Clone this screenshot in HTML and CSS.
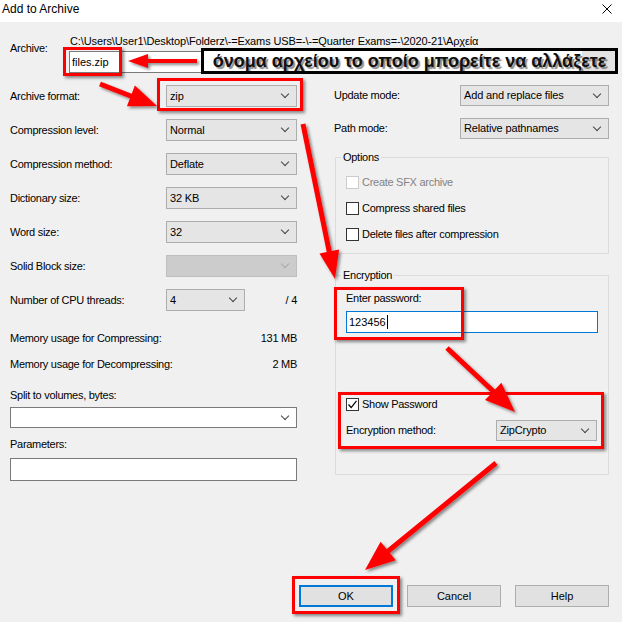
FILE: index.html
```html
<!DOCTYPE html>
<html lang="en">
<head>
<meta charset="utf-8">
<title>Add to Archive</title>
<link rel="stylesheet" href="styles.css">
</head>
<body>
<div class="window">
  <div class="titlebar">
    <span class="title">Add to Archive</span>
    <svg class="close" width="10" height="10" viewBox="0 0 10 10"><path d="M0.5 0.5L9.5 9.5M9.5 0.5L0.5 9.5" stroke="#000" stroke-width="1"/></svg>
  </div>
  <div class="body">
    <div class="archive-row">
      <div class="archive-label">Archive:</div>
      <div class="archive-main">
        <div class="path">C:\Users\User1\Desktop\Folderz\-=Exams USB=-\-=Quarter Exams=-\2020-21\Αρχεία</div>
        <div class="archive-inputs">
          <div class="edit-combo">files.zip</div>
          <div class="browse"></div>
        </div>
      </div>
    </div>

    <div class="columns">
      <div class="left">
        <div class="form-grid">
          <div class="lbl">Archive format:</div>
          <div class="combo"><span>zip</span></div>
          <div class="lbl">Compression level:</div>
          <div class="combo"><span>Normal</span></div>
          <div class="lbl">Compression method:</div>
          <div class="combo"><span>Deflate</span></div>
          <div class="lbl">Dictionary size:</div>
          <div class="combo"><span>32 KB</span></div>
          <div class="lbl">Word size:</div>
          <div class="combo"><span>32</span></div>
          <div class="lbl">Solid Block size:</div>
          <div class="combo disabled"><span></span></div>
          <div class="lbl">Number of CPU threads:</div>
          <div class="cpu-cell">
            <div class="combo cpu"><span>4</span></div>
            <span class="cpu-max">/ 4</span>
          </div>
        </div>
        <div class="mem-row first"><span>Memory usage for Compressing:</span><span>131 MB</span></div>
        <div class="mem-row"><span>Memory usage for Decompressing:</span><span>2 MB</span></div>
        <div class="field-label split-label">Split to volumes, bytes:</div>
        <div class="combo white split"><span></span></div>
        <div class="field-label params-label">Parameters:</div>
        <div class="textbox params"></div>
      </div>

      <div class="right">
        <div class="right-grid">
          <div class="lbl">Update mode:</div>
          <div class="combo"><span>Add and replace files</span></div>
          <div class="lbl">Path mode:</div>
          <div class="combo"><span>Relative pathnames</span></div>
        </div>

        <fieldset class="group options">
          <legend>Options</legend>
          <div class="check disabled"><span class="box"></span><span>Create SFX archive</span></div>
          <div class="check"><span class="box"></span><span>Compress shared files</span></div>
          <div class="check"><span class="box"></span><span>Delete files after compression</span></div>
        </fieldset>

        <fieldset class="group encryption">
          <legend>Encryption</legend>
          <div class="pw-label">Enter password:</div>
          <div class="textbox focused pw">123456<span class="caret"></span></div>
          <div class="check show-pw"><span class="box checked"><svg width="11" height="11" viewBox="0 0 11 11"><path d="M1.5 5.5L4.2 8.5L9.5 1.8" fill="none" stroke="#000" stroke-width="1.2"/></svg></span><span>Show Password</span></div>
          <div class="method-row">
            <span>Encryption method:</span>
            <div class="combo method"><span>ZipCrypto</span></div>
          </div>
        </fieldset>
      </div>
    </div>

    <div class="buttons">
      <div class="btn default">OK</div>
      <div class="btn">Cancel</div>
      <div class="btn">Help</div>
    </div>
  </div>

  <!-- annotations layered over the dialog -->
  <div class="redbox rb-file"></div>
  <div class="redbox rb-format"></div>
  <div class="redbox rb-pw"></div>
  <div class="redbox rb-show"></div>
  <div class="redbox rb-ok"></div>
  <div class="note">όνομα αρχείου το οποίο μπορείτε να αλλάξετε</div>

  <svg class="arrows" width="622" height="622" viewBox="0 0 622 622">
    <defs>
      <filter id="sh" x="-20%" y="-20%" width="140%" height="140%">
        <feDropShadow dx="2" dy="2" stdDeviation="1.4" flood-color="#000" flood-opacity="0.45"/>
      </filter>
    </defs>
    <g fill="#ff0000" stroke="#ff0000" filter="url(#sh)">
      <line x1="197" y1="61" x2="146" y2="61" stroke-width="4"/>
      <polygon points="128,61 148,54 148,68" stroke="none"/>

      <line x1="100" y1="84" x2="132" y2="96.5" stroke-width="5"/>
      <polygon points="157,106 126.9,106.2 134.9,85.6" stroke="none"/>

      <line x1="303" y1="124" x2="329.5" y2="253" stroke-width="5"/>
      <polygon points="335,279 319.5,253.6 339.1,249.6" stroke="none"/>

      <line x1="447" y1="348" x2="494" y2="392" stroke-width="5"/>
      <polygon points="515,412 485,400.1 501.4,382.7" stroke="none"/>

      <line x1="496" y1="463" x2="387" y2="552" stroke-width="5"/>
      <polygon points="365,570 380.6,541.7 395.8,560.3" stroke="none"/>
    </g>
  </svg>
</div>
</body>
</html>
```

FILE: styles.css
```css
* { box-sizing: border-box; }

html, body {
  margin: 0;
  padding: 0;
  background: #f0f0f0;
}

body {
  font-family: "Liberation Sans", Arial, sans-serif;
  font-size: 11px;
  line-height: 13px;
  letter-spacing: -0.28px;
  color: #000;
}

.window {
  position: relative;
  width: 622px;
  height: 622px;
  background: #f0f0f0;
  overflow: hidden;
}

/* title bar */
.titlebar {
  height: 22px;
  background: #fff;
  display: flex;
  align-items: flex-start;
  justify-content: space-between;
  padding: 0 10px 0 2px;
}
.title {
  font-size: 12px;
  line-height: 18px;
  letter-spacing: 0;
}
.close {
  margin-top: 4px;
}

.body {
  padding: 13px 13px 0 10px;
}

/* archive row */
.archive-row {
  display: grid;
  grid-template-columns: 59px 1fr;
}
.archive-label {
  margin-top: 7px;
}
.path {
  padding-left: 1px;
  white-space: nowrap;
  overflow: hidden;
  letter-spacing: -0.12px;
}
.archive-inputs {
  display: flex;
  gap: 4px;
  margin-top: 3px;
  height: 22px;
}
.edit-combo {
  flex: 1;
  background: #fff;
  border: 1px solid #7a7a7a;
  padding: 4px 2px;
  letter-spacing: 0;
}
.browse {
  width: 28px;
  background: #e1e1e1;
  border: 1px solid #adadad;
}

/* two columns */
.columns {
  display: grid;
  grid-template-columns: 287px 275px;
  column-gap: 37px;
  margin-top: 12px;
  align-items: start;
}

.form-grid {
  display: grid;
  grid-template-columns: 156px 131px;
  grid-auto-rows: 22px;
  row-gap: 12px;
}
.lbl {
  align-self: center;
  white-space: nowrap;
}

.combo {
  display: flex;
  align-items: center;
  justify-content: space-between;
  background: #e5e5e5;
  border: 1px solid #adadad;
  padding: 0 8px 0 3px;
  white-space: nowrap;
  letter-spacing: -0.15px;
}
.combo::after {
  content: "";
  width: 5px;
  height: 5px;
  border-right: 1px solid #444;
  border-bottom: 1px solid #444;
  transform: rotate(45deg);
  margin-top: -4px;
  flex: none;
}
.combo.disabled {
  background: #cccccc;
  border-color: #bfbfbf;
}
.combo.disabled::after {
  border-color: #a8a8a8;
}
.combo.white {
  background: #fff;
  border-color: #7a7a7a;
}

.cpu-cell {
  display: flex;
  justify-content: space-between;
  align-items: center;
}
.combo.cpu {
  width: 79px;
  height: 22px;
}

.mem-row {
  display: flex;
  justify-content: space-between;
  margin-top: 13px;
}
.mem-row.first {
  margin-top: 21px;
}
.field-label.split-label { margin-top: 18px; }
.combo.split {
  margin-top: 5px;
  height: 21px;
}
.field-label.params-label { margin-top: 10px; }

.textbox {
  background: #fff;
  border: 1px solid #7a7a7a;
}
.textbox.params {
  margin-top: 7px;
  height: 23px;
}

/* right column */
.right-grid {
  display: grid;
  grid-template-columns: 126px 149px;
  grid-auto-rows: 21px;
  row-gap: 12px;
}

.group {
  margin: 0 0 0 1px;
  border: 1px solid #dcdcdc;
  padding: 12px 10px 12px 10px;
  min-width: 0;
}
.group legend {
  padding: 0 2px;
  margin-left: -5px;
  line-height: 13px;
}
.options {
  margin-top: 12px;
}
.encryption {
  margin-top: 15px;
  padding-top: 10px;
  padding-bottom: 33px;
}

.check {
  display: flex;
  align-items: center;
  gap: 3px;
  height: 13px;
  white-space: nowrap;
}
.check + .check {
  margin-top: 13px;
}
.check .box {
  width: 13px;
  height: 13px;
  background: #fff;
  border: 1px solid #333;
  flex: none;
  display: flex;
  align-items: center;
  justify-content: center;
}
.check.disabled {
  color: #838383;
}
.check.disabled .box {
  border-color: #cccccc;
}

.textbox.pw {
  margin-top: 6px;
  height: 22px;
  border-color: #0078d7;
  padding: 3px 2px;
  display: flex;
  align-items: center;
  letter-spacing: 0;
}
.caret {
  display: inline-block;
  width: 1px;
  height: 14px;
  background: #000;
  margin-left: 1px;
}

.check.show-pw {
  margin-top: 65px;
}

.method-row {
  display: flex;
  justify-content: space-between;
  align-items: center;
  margin-top: 9px;
}
.combo.method {
  width: 101px;
  height: 21px;
  margin-right: 1px;
}

/* buttons */
.buttons {
  display: flex;
  justify-content: flex-end;
  gap: 14px;
  margin-top: 104px;
}
.btn {
  width: 94px;
  height: 22px;
  background: #e1e1e1;
  border: 1px solid #adadad;
  text-align: center;
  line-height: 20px;
  letter-spacing: 0;
}
.btn.default {
  border: 2px solid #0078d7;
  line-height: 18px;
}

/* annotations */
.redbox {
  position: absolute;
  border: 3px solid #ff0000;
  box-shadow: 2px 2px 3px rgba(0, 0, 0, 0.45);
}
.rb-file   { left: 63px;  top: 47px;  width: 59px;  height: 29px; }
.rb-format { left: 157px; top: 78px;  width: 146px; height: 33px; }
.rb-pw     { left: 334px; top: 287px; width: 130px; height: 53px; }
.rb-show   { left: 338px; top: 392px; width: 266px; height: 57px; }
.rb-ok     { left: 292px; top: 576px; width: 108px; height: 38px; }

.note {
  position: absolute;
  left: 201px;
  top: 48px;
  width: 417px;
  height: 26px;
  border: 3px solid #000;
  background: linear-gradient(to right, #fff 0 378px, #e3e3e3 378px);
  font-weight: bold;
  font-size: 18px;
  line-height: 20px;
  letter-spacing: 0;
  text-align: center;
  color: #111;
  text-shadow: 2px 2px 1px rgba(0, 0, 0, 0.45);
  white-space: nowrap;
}

.arrows {
  position: absolute;
  left: 0;
  top: 0;
  pointer-events: none;
}
```
